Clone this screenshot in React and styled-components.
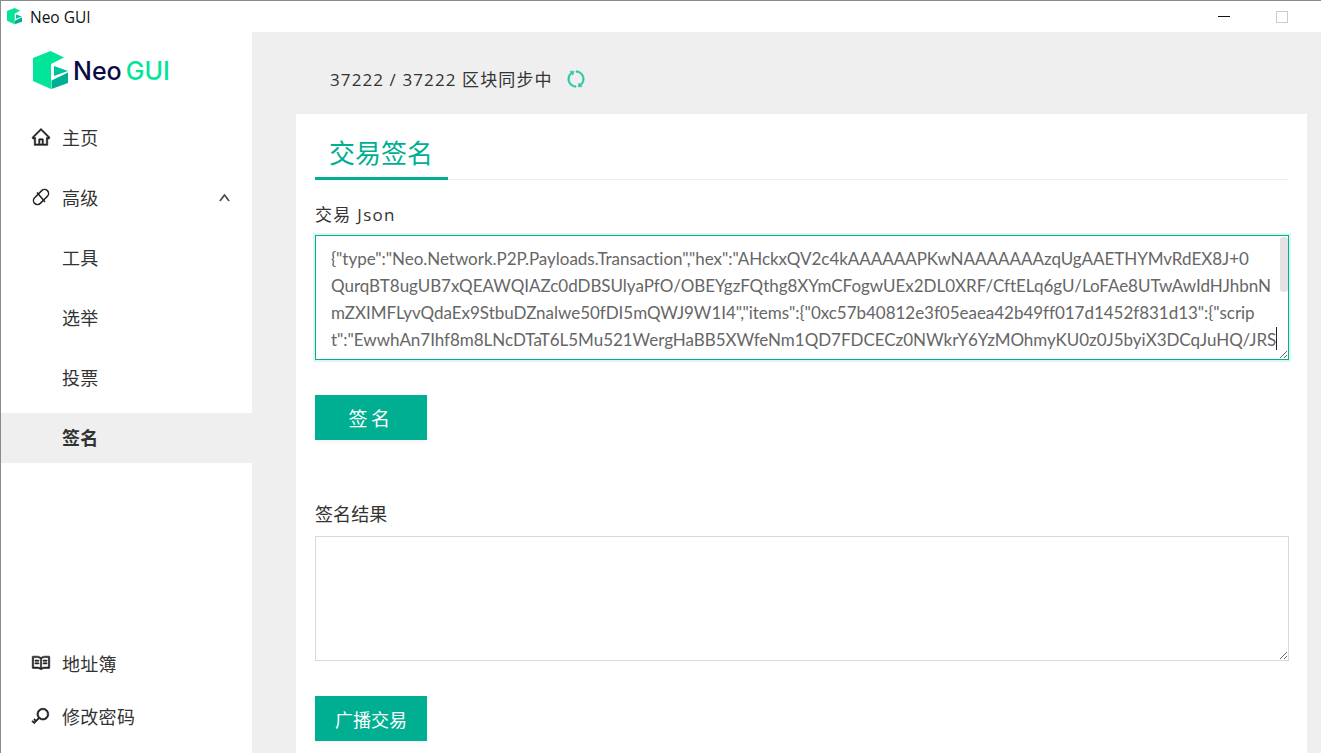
import React from 'react'
import styled, { createGlobalStyle } from 'styled-components'
import { AiOutlineHome, AiOutlineRead, AiOutlineKey, AiOutlineSync, AiOutlineUp } from 'react-icons/ai'

const GlobalStyle = createGlobalStyle`
  html, body {
    margin: 0;
    height: 100%;
    overflow: hidden;
    background: #fff;
  }
  #root {
    height: 100%;
  }
  * {
    box-sizing: border-box;
  }
`

const Window = styled.div`
  width: 1321px;
  height: 753px;
  display: flex;
  flex-direction: column;
  border-top: 1px solid #8a8a8a;
  border-left: 1px solid #8a8a8a;
  font-family: "Open Sans", "Noto Sans CJK SC", sans-serif;
  color: #333;
  overflow: hidden;
`

const TitleBar = styled.div`
  height: 31px;
  flex: none;
  display: flex;
  align-items: center;
  padding-left: 6px;
  background: #fff;
`

const WindowTitle = styled.span`
  margin-left: 8px;
  margin-top: 1px;
  font-size: 15.5px;
  color: #111;
  font-family: "Open Sans", sans-serif;
`

const WindowButtons = styled.div`
  margin-left: auto;
  display: flex;
  align-items: center;
  padding-right: 33px;
  gap: 46px;
`

const MinButton = styled.span`
  width: 12px;
  height: 1px;
  background: #111;
`

const MaxButton = styled.span`
  width: 12px;
  height: 12px;
  border: 1px solid #ccc;
`

const Body = styled.div`
  flex: 1;
  display: flex;
  min-height: 0;
`

const Sidebar = styled.nav`
  width: 251px;
  flex: none;
  display: flex;
  flex-direction: column;
  background: #fff;
`

const LogoRow = styled.div`
  height: 76px;
  flex: none;
  display: flex;
  align-items: flex-start;
  padding: 19px 0 0 32px;
`

const LogoText = styled.span`
  margin-left: 5px;
  margin-top: 7px;
  font-family: "Inter", sans-serif;
  font-size: 25px;
  line-height: 26px;
  font-weight: 500;
  color: #0b0b45;
  display: flex;
  gap: 4px;
`

const LogoAccent = styled.span`
  color: #00e599;
`

const Menu = styled.div`
  display: flex;
  flex-direction: column;
`

const MenuItem = styled.div`
  height: 60px;
  display: flex;
  align-items: center;
  padding: 0 21px 2px ${p => (p.$sub ? '61px' : '30px')};
  font-size: 18px;
  letter-spacing: 0.3px;
  font-weight: ${p => (p.$active ? 700 : 400)};
  color: #333;
  position: relative;
  z-index: 0;

  ${p => p.$active && `
    &::before {
      content: "";
      position: absolute;
      left: 0;
      right: 0;
      top: 5px;
      bottom: 5px;
      background: #efefef;
      z-index: -1;
    }
  `}

  svg {
    flex: none;
  }
`

const MenuLabel = styled.span`
  margin-left: ${p => (p.$icon ? '11px' : '0')};
`

const Chevron = styled.span`
  margin-left: auto;
  display: flex;
  color: #444;
`

const BottomMenu = styled.div`
  margin-top: auto;
  display: flex;
  flex-direction: column;
  padding-bottom: 11px;
`

const BottomItem = styled(MenuItem)`
  height: 53px;
  padding-bottom: 0;
`

const Main = styled.main`
  flex: 1;
  min-width: 0;
  display: flex;
  flex-direction: column;
  background: #efefef;
  padding: 0 14px 0 44px;
`

const StatusBar = styled.div`
  height: 82px;
  flex: none;
  display: flex;
  align-items: center;
  padding: 11px 0 0 34px;
  font-size: 17px;
  letter-spacing: 1.1px;
  color: #333;
  gap: 13px;
`

const SyncIcon = styled(AiOutlineSync)`
  transform: rotate(90deg);
`

const Card = styled.section`
  flex: 1;
  background: #fff;
  padding: 19px 19px 0;
`

const Tabs = styled.div`
  border-bottom: 1px solid #eee;
  display: flex;
`

const Tab = styled.h1`
  margin: 0 0 -1px;
  padding: 0 15px 0 14px;
  height: 47px;
  font-size: 26px;
  line-height: 41px;
  font-weight: 400;
  color: #00af92;
  border-bottom: 3px solid #00af92;
`

const FieldLabel = styled.label`
  display: block;
  margin-top: ${p => p.$top || 0}px;
  font-size: 17px;
  line-height: 22px;
  color: #333;
  letter-spacing: 1.3px;
`

const JsonBox = styled.div`
  position: relative;
  width: 974px;
  margin-top: 9px;
`

const JsonArea = styled.textarea`
  display: block;
  width: 974px;
  height: 125px;
  padding: 9px 0 0 15px;
  border: 1px solid #00af92;
  box-shadow: 0 0 0 2px rgba(0, 175, 146, 0.13);
  outline: none;
  resize: vertical;
  white-space: pre;
  overflow: hidden;
  font-family: "Lato", "Noto Sans CJK SC", sans-serif;
  font-size: 17px;
  line-height: 27px;
  letter-spacing: -0.03px;
  color: #666;
`

const Caret = styled.span`
  position: absolute;
  left: 961px;
  top: 92px;
  width: 1px;
  height: 23px;
  background: #222;
`

const ScrollThumb = styled.span`
  position: absolute;
  right: 1px;
  top: 2px;
  width: 8px;
  height: 55px;
  background: #e3e3e3;
  border-radius: 3px;
`

const Button = styled.button`
  display: flex;
  align-items: center;
  justify-content: center;
  width: 112px;
  height: 45px;
  margin-top: ${p => p.$top}px;
  border: none;
  background: #00af92;
  box-shadow: 0 2px 4px rgba(0, 0, 0, 0.05);
  color: #fff;
  font-family: "Open Sans", "Noto Sans CJK SC", sans-serif;
  font-size: ${p => p.$size}px;
  letter-spacing: ${p => p.$spacing}px;
`

const ResultLabel = styled(FieldLabel)`
  margin-top: 62px;
  font-size: 18px;
  line-height: 24px;
  letter-spacing: 0.1px;
`

const ResultArea = styled.textarea`
  display: block;
  width: 974px;
  height: 125px;
  margin-top: 10px;
  border: 1px solid #d9d9d9;
  outline: none;
  resize: vertical;
`

const LogoMark = ({ width }) => (
  <svg width={width} height={(width * 38) / 35} viewBox="0 0 35 38" style={{ display: 'block', flex: 'none' }}>
    <path d="M0 7 17.5 0 31 6.5 18 13V38L0 30Z" fill="#00e599" />
    <path d="M21 15 35 20 21 25Z" fill="#00c29a" />
    <path d="M18.5 29.5 35 21.5V32L18.5 38Z" fill="#00af92" />
  </svg>
)

const LinkIcon = () => (
  <svg width="20" height="20" viewBox="0 0 20 20" fill="none" stroke="#222" strokeWidth="1.5">
    <rect x="1" y="6" width="18" height="8" rx="4" transform="rotate(-45 10 10)" />
    <path d="M6 5.5 14 15" />
  </svg>
)

const iconProps = { size: 20, strokeWidth: 30, stroke: 'currentColor', color: '#222' }

const jsonLines = [
  '{"type":"Neo.Network.P2P.Payloads.Transaction","hex":"AHckxQV2c4kAAAAAAPKwNAAAAAAAzqUgAAETHYMvRdEX8J+0',
  'QurqBT8ugUB7xQEAWQIAZc0dDBSUlyaPfO/OBEYgzFQthg8XYmCFogwUEx2DL0XRF/CftELq6gU/LoFAe8UTwAwIdHJhbnN',
  'mZXIMFLyvQdaEx9StbuDZnalwe50fDI5mQWJ9W1I4","items":{"0xc57b40812e3f05eaea42b49ff017d1452f831d13":{"scrip',
  't":"EwwhAn7Ihf8m8LNcDTaT6L5Mu521WergHaBB5XWfeNm1QD7FDCECz0NWkrY6YzMOhmyKU0z0J5byiX3DCqJuHQ/JRS',
].join('\n')

const App = () => {
  return (
    <Window>
      <GlobalStyle />
      <TitleBar>
        <LogoMark width={15} />
        <WindowTitle>Neo GUI</WindowTitle>
        <WindowButtons>
          <MinButton />
          <MaxButton />
        </WindowButtons>
      </TitleBar>
      <Body>
        <Sidebar>
          <LogoRow>
            <LogoMark width={35} />
            <LogoText>Neo<LogoAccent>GUI</LogoAccent></LogoText>
          </LogoRow>
          <Menu>
            <MenuItem><AiOutlineHome {...iconProps} /><MenuLabel $icon>主页</MenuLabel></MenuItem>
            <MenuItem>
              <LinkIcon />
              <MenuLabel $icon>高级</MenuLabel>
              <Chevron><AiOutlineUp size={13} strokeWidth={60} stroke="currentColor" /></Chevron>
            </MenuItem>
            <MenuItem $sub><MenuLabel>工具</MenuLabel></MenuItem>
            <MenuItem $sub><MenuLabel>选举</MenuLabel></MenuItem>
            <MenuItem $sub><MenuLabel>投票</MenuLabel></MenuItem>
            <MenuItem $sub $active><MenuLabel>签名</MenuLabel></MenuItem>
          </Menu>
          <BottomMenu>
            <BottomItem><AiOutlineRead {...iconProps} /><MenuLabel $icon>地址簿</MenuLabel></BottomItem>
            <BottomItem><AiOutlineKey {...iconProps} /><MenuLabel $icon>修改密码</MenuLabel></BottomItem>
          </BottomMenu>
        </Sidebar>
        <Main>
          <StatusBar>
            <span>37222 / 37222 区块同步中</span>
            <SyncIcon size={20} color="#2cc7a6" strokeWidth={30} stroke="currentColor" />
          </StatusBar>
          <Card>
            <Tabs><Tab>交易签名</Tab></Tabs>
            <FieldLabel $top={24}>交易 Json</FieldLabel>
            <JsonBox>
              <JsonArea defaultValue={jsonLines} spellCheck={false} />
              <Caret />
              <ScrollThumb />
            </JsonBox>
            <Button $top={35} $size={19} $spacing={3.5}>签名</Button>
            <ResultLabel>签名结果</ResultLabel>
            <ResultArea />
            <Button $top={35} $size={18} $spacing={0}>广播交易</Button>
          </Card>
        </Main>
      </Body>
    </Window>
  )
}

export default App
